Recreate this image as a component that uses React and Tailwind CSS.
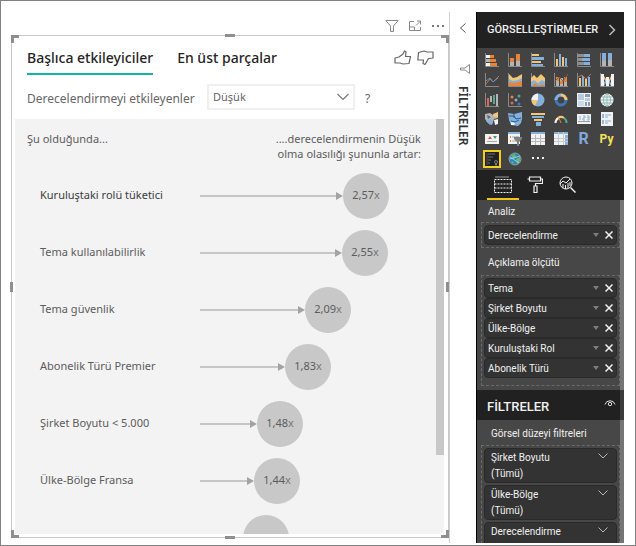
import React from "react";

const O = "#e8833a";
const B = "#86b0dc";
const Y = "#f3c677";
const G = "#b4b4b4";
const W = "#f2f2f2";
const D = "#3f79b5";

const influencers = [
  { label: "Kuruluştaki rolü tüketici", value: 2.57, strong: true },
  { label: "Tema kullanılabilirlik", value: 2.55 },
  { label: "Tema güvenlik", value: 2.09 },
  { label: "Abonelik Türü Premier", value: 1.83 },
  { label: "Şirket Boyutu < 5.000", value: 1.48 },
  { label: "Ülke-Bölge Fransa", value: 1.44 },
  { label: "", value: 1.3 },
];

const filters = [
  { name: "Şirket Boyutu", state: "(Tümü)" },
  { name: "Ülke-Bölge", state: "(Tümü)" },
  { name: "Derecelendirme", state: "" },
];

const arrowWidth = (value) => Math.round(54 + (value - 1.44) * 79);
const format = (value) => value.toFixed(2).replace(".", ",");

const axis = <path d="M.5 0v13.5H14" fill="none" stroke="#8a8a8a" strokeWidth="1" />;

const vizIcons = [
  ["Yığılmış çubuk", <>{axis}<path d="M1 2h4v3H1zM1 10h4v3H1z" fill={W} /><path d="M5 2h4v3H5zM5 10h7v3H5z" fill={O} /><path d="M1 6h4v3H1z" fill={G} /><path d="M5 6h6v3H5z" fill={O} /></>],
  ["Yığılmış sütun", <>{axis}<path d="M2 9h4v4H2zM8 8h4v5H8z" fill={G} /><path d="M2 5h4v4H2zM8 1h4v7H8z" fill={O} /></>],
  ["Kümelenmiş çubuk", <>{axis}<path d="M1 1h7v2H1zM1 8h9v2H1z" fill={Y} /><path d="M1 4h12v3H1zM1 11h11v2H1z" fill={B} /></>],
  ["Kümelenmiş sütun", <>{axis}<path d="M2 6h2v7H2zM8 4h2v9H8z" fill={Y} /><path d="M5 1h2v12H5zM11 5h2v8h-2z" fill={B} /></>],
  ["%100 çubuk", <>{axis}<path d="M1 1h6v3H1zM1 5h4v3H1zM1 9h6v3H1z" fill="#8f8f8f" /><path d="M7 1h6v3H7zM5 5h8v3H5zM7 9h6v3H7z" fill={B} /></>],
  ["%100 sütun", <>{axis}<path d="M2 8h4v5H2zM8 7h4v6H8z" fill={G} /><path d="M2 0h4v8H2zM8 0h4v7H8z" fill={B} /></>],

  ["Çizgi", <>{axis}<path d="M1 11l4-5 3 3 6-6" fill="none" stroke="#b9735a" /><path d="M1 8l4-3 3 4 5-4" fill="none" stroke="#6b8fb8" /></>],
  ["Alan", <>{axis}<path d="M1 1l4 4 4-1 5-3v12H1z" fill={Y} /><path d="M1 6l4 2 5-1 4-2v8H1z" fill={B} /><path d="M1 9l5 1 8-2v5H1z" fill={O} /></>],
  ["Yığılmış alan", <>{axis}<path d="M0 5l3-3 3 3 4-4 4 4v8H0z" fill={Y} /><path d="M0 9l3-2 4 3 4-3 3 2v4H0z" fill={B} /><path d="M1 13l3-3 4 3 3-2 3 2z" fill={O} /></>],
  ["Çizgi ve yığılmış sütun", <>{axis}<path d="M2 7h3v6H2zM6 5h3v8H6zM10 7h3v6h-3z" fill={G} /><path d="M2 4h3v4H2zM6 8h3v3H6zM10 4h3v5h-3z" fill={O} /><path d="M1 8l4-4 4 4 5-7" fill="none" stroke="#8c5d46" /></>],
  ["Çizgi ve kümelenmiş sütun", <>{axis}<path d="M2 5h2v8H2zM8 6h2v7H8z" fill={Y} /><path d="M5 3h2v10H5zM11 4h2v9h-2z" fill={B} /><path d="M1 4l4-2 4 4 5-5" fill="none" stroke="#b9735a" /></>],
  ["Şerit", <>{axis}<path d="M1 1h3v12H1zM6 4h3v9H6zM11 1h3v12h-3z" fill={W} /><path d="M4 3l2 3v3L4 6zM9 7l2-4v3L9 10z" fill={Y} /><path d="M4 9l2-2v3l-2 3zM9 7l2 3v3l-2-3z" fill={B} /></>],

  ["Şelale", <>{axis}<path d="M2 5h2v8H2z" fill="#d8695a" /><path d="M5 3h2v6H5zM11 1h2v12h-2z" fill={G} /><path d="M8 2h2v9H8z" fill="#5da58a" /></>],
  ["Dağılım", <>{axis}<circle cx="4" cy="4" r="1.500" fill={O} /><circle cx="8" cy="7" r="1.500" fill={B} /><circle cx="11" cy="3" r="1.500" fill="#5da58a" /><circle cx="4" cy="10" r="1.500" fill="#d8695a" /><circle cx="11" cy="11" r="1.500" fill={D} /></>],
  ["Pasta", <><circle cx="7" cy="7" r="6.500" fill={B} /><path d="M7 7V.5A6.500 6.500 0 0 0 .5 7z" fill={W} /><path d="M7 7L.5 7A6.500 6.500 0 0 0 4 12.800z" fill={Y} /></>],
  ["Halka", <><circle cx="7" cy="7" r="5" fill="none" stroke={D} strokeWidth="3" /><path d="M7 2a5 5 0 0 1 5 5" fill="none" stroke={Y} strokeWidth="3" /><path d="M2 7a5 5 0 0 1 5-5" fill="none" stroke={B} strokeWidth="3" /></>],
  ["Ağaç haritası", <><path d="M0 0h14v14H0z" fill={W} /><path d="M1 1h6v6H1zM8 5h5v3H8z" fill="#b7cbe0" /><path d="M1 8h6v5H1z" fill="#c9dced" /><path d="M8 1h5v3H8zM8 9h2v4H8zM11 9h2v4h-2z" fill="#8a9db0" /></>],
  ["Harita", <><circle cx="7" cy="7" r="6.500" fill={W} /><path d="M1 7h12M7 1v12M2 4h10M2 10h10" stroke="#8dbcb9" fill="none" /><ellipse cx="7" cy="7" rx="3.500" ry="6" fill="none" stroke="#8dbcb9" /></>],

  ["Kartogram", <><path d="M0 2l5-1 3 2 5-2v5l-4 1-2 6-4-2-3-4z" fill={G} /><path d="M8 2l5-2v5H9z" fill={Y} /><path d="M1 9l5-2 2 3-3 3z" fill={B} /><path d="M9 8l4-1v5l-3 1z" fill={W} /><path d="M2 3l4 2-3 2z" fill="#5a6670" /></>],
  ["Şekil haritası", <><path d="M0 1l6 1 8-2v7l-1 4-3 3-7-1-2-5z" fill={B} /><path d="M1 4h5l2 3 5-1M6 2v4M3 9l4 1 4-2" stroke="#235a94" fill="none" /><path d="M3 10l4 1-1 2H3z" fill={W} /></>],
  ["Huni", <><path d="M0 1h14v2H0z" fill={Y} /><path d="M1 4h12v2H1z" fill={B} /><path d="M3 7h8v2H3z" fill={Y} /><path d="M5 10h5v4H5z" fill={B} /></>],
  ["Ölçer", <><path d="M1.500 11a5.500 5.500 0 0 1 3-5" fill="none" stroke={W} strokeWidth="2" /><path d="M4 6a5 5 0 0 1 6 0" fill="none" stroke={Y} strokeWidth="2" /><path d="M10 6a5.500 5.500 0 0 1 2.500 5" fill="none" stroke="#5da58a" strokeWidth="2" /><path d="M7 11L5 6" stroke={O} /></>],
  ["Kart", <><path d="M0 2h14v10H0z" fill={W} /><path d="M1 9h12v1H1z" fill="#9b9b9b" /><path d="M3 4v4M6 4h2v2H6v2h2M10 4h2v4h-2M10 6h2" stroke={B} fill="none" /></>],
  ["Çok satırlı kart", <><path d="M1 0h12v14H1z" fill={W} /><path d="M3 2v4M3 8v4" stroke={D} /><path d="M5 3h6M5 5h3M5 9h6M5 11h3" stroke={B} /></>],

  ["KPI", <><path d="M0 2h14v10H0z" fill={W} /><path d="M8 4h4l-2 3z" fill="#489a78" /><path d="M3 7l2-3 2 3z" fill="#d65b4b" /><path d="M2 9.500h10" stroke="#aaa" /></>],
  ["Dilimleyici", <><path d="M0 0h12v12H0z" fill={W} /><path d="M0 0h12v2H0z" fill={B} /><path d="M2 4h1v2H2zM2 8h1v2H2z" fill={O} /><path d="M4 5h7l-3 0M4 9h4" stroke="#aaa" /><path d="M6 5h8v2l-3 3v4H9v-4L6 7z" fill="#808080" /></>],
  ["Tablo", <><path d="M0 0h14v13H0z" fill={W} /><path d="M0 0h14v2H0z" fill={B} /><path d="M0 6.500h14M0 9.500h14M4.500 3v10M9.500 3v10" stroke="#b8b8b8" /></>],
  ["Matris", <><path d="M0 0h14v13H0z" fill={W} /><path d="M0 0h14v2H0zM11 3h3v10h-3z" fill={B} /><path d="M0 6.500h14M0 9.500h14M4.500 0v13M9.500 0v13" stroke="#c4cbd2" /></>],
  ["R betiği", "R"],
  ["Python betiği", "Py"],
];

function Svg({ children, className = "size-3.5", box = "0 0 14 14" }) {
  return (
    <svg aria-hidden="true" viewBox={box} className={"shrink-0 " + className} fill="none" stroke="none">
      {children}
    </svg>
  );
}

function IconButton({ label, children, className = "" }) {
  return (
    <button type="button" aria-label={label} className={"grid place-items-center " + className}>
      {children}
    </button>
  );
}

function Glyph({ children }) {
  if (children === "R") return <span className="text-base leading-4 font-bold text-[#7fa9dc]">R</span>;
  if (children === "Py") return <span className="text-xs leading-4 font-bold text-[#f5e05a]">Py</span>;
  return <Svg>{children}</Svg>;
}

function Handles() {
  const c = "absolute border-[#8f8f8f] ";
  return (
    <div aria-hidden="true" className="pointer-events-none">
      <span className={c + "-top-px -left-px size-2 border-t-[3px] border-l-[3px]"} />
      <span className={c + "-top-px -right-px size-2 border-t-[3px] border-r-[3px]"} />
      <span className={c + "-bottom-px -left-px size-2 border-b-[3px] border-l-[3px]"} />
      <span className={c + "-right-px -bottom-px size-2 border-r-[3px] border-b-[3px]"} />
      <span className="absolute -top-0.5 left-1/2 h-[3px] w-2.5 -translate-x-1/2 bg-[#8f8f8f]" />
      <span className="absolute -bottom-0.5 left-1/2 h-[3px] w-2.5 -translate-x-1/2 bg-[#8f8f8f]" />
      <span className="absolute top-1/2 -left-0.5 h-2.5 w-[3px] -translate-y-1/2 bg-[#8f8f8f]" />
      <span className="absolute top-1/2 -right-px h-2.5 w-[3px] -translate-y-1/2 bg-[#8f8f8f]" />
    </div>
  );
}

const thumbUp = "M1 8l4-1 4-3 1.500-3 1.500 1-.5 4.500h5l-1.500 7-6 .5-3-1H1z";
const thumbDown = "M1.500 2.500L7 1l3 1h6v6l-4.500.5L8 14.500l-2-1 .5-3.500H.8z";

function Visual() {
  return (
    <section className="relative flex min-h-0 flex-1 flex-col border border-[#c8c8c8] pr-1 pb-[3px] pl-[3px]">
      <Handles />
      <div className="flex h-12 items-center pr-2.5 pl-3 text-sm font-medium text-[#252423]">
        <div role="tablist" className="flex flex-1 gap-6">
          <button type="button" role="tab" aria-selected="true" className="border-b-2 border-[#12b5a8] pb-[3px] leading-6">
            Başlıca etkileyiciler
          </button>
          <button type="button" role="tab" aria-selected="false" className="border-b-2 border-transparent pb-[3px] leading-6">
            En üst parçalar
          </button>
        </div>
        <div className="flex gap-1.5 pb-1">
          <IconButton label="Beğen">
            <Svg className="h-4 w-[17px]" box="0 0 17 16"><path d={thumbUp} stroke="#666" strokeWidth="1.200" strokeLinejoin="round" /></Svg>
          </IconButton>
          <IconButton label="Beğenme">
            <Svg className="h-4 w-[17px]" box="0 0 17 16"><path d={thumbDown} stroke="#666" strokeWidth="1.200" strokeLinejoin="round" /></Svg>
          </IconButton>
        </div>
      </div>

      <div className="flex h-[35px] items-start pl-3 text-xs text-[#666]">
        <label htmlFor="level" className="w-[180px] shrink-0 leading-[30px] whitespace-nowrap">
          Derecelendirmeyi etkileyenler
        </label>
        <div className="relative">
          <select id="level" className="h-[26px] w-[148px] appearance-none border-2 border-[#efefef] bg-white px-1 text-[11px]">
            <option>Düşük</option>
          </select>
          <Svg className="pointer-events-none absolute top-2 right-1.5 h-2.5 w-3" box="0 0 12 10"><path d="M.5 2L6 7.500 11.500 2" stroke="#777" strokeWidth="1.200" /></Svg>
        </div>
        <button type="button" aria-label="Yardım" className="ml-2.5 leading-[30px]">?</button>
      </div>

      <div className="flex min-h-0 flex-1 overflow-hidden bg-[#f3f3f3] text-[11px] text-[#5c5c5c]">
        <div className="flex-1">
          <div className="flex h-12 justify-between pt-3 pr-[15px] pl-3 leading-[15px]">
            <p>Şu olduğunda...</p>
            <p className="text-right">....derecelendirmenin Düşük<br />olma olasılığı şununla artar:</p>
          </div>
          <ul>
            {influencers.map(({ label, value, strong }) => (
              <li key={value} className="flex h-[57px] items-center pl-[25px]">
                <span className={"w-[160px] shrink-0 whitespace-nowrap " + (strong ? "text-[#3c3c3c]" : "")}>{label}</span>
                <span className="flex shrink-0 items-center" style={{ width: arrowWidth(value) }}>
                  <span className="h-0.5 flex-1 bg-[#c6c6c6]" />
                  <Svg className="h-2 w-[7px]" box="0 0 7 8"><path d="M0 0l7 4-7 4z" fill="#a3a3a3" /></Svg>
                </span>
                <span className="grid size-[46px] shrink-0 place-items-center rounded-full bg-[#c8c8c8]">
                  {label && <span>{format(value)}<span className="text-[#777]">x</span></span>}
                </span>
              </li>
            ))}
          </ul>
        </div>
        <div aria-hidden="true" className="h-[81%] w-2 bg-[#c8c8c8]" />
      </div>
    </section>
  );
}

function Field({ name }) {
  return (
    <li className="flex h-5 items-center rounded-sm border border-[#2a2a2a] bg-[#333] px-[3px]">
      <span className="flex-1 whitespace-nowrap">{name}</span>
      <IconButton label={name + " menüsü"} className="mr-1.5">
        <Svg className="h-1 w-1.5" box="0 0 6 4"><path d="M0 0h6L3 4z" fill="#7d7d7d" /></Svg>
      </IconButton>
      <IconButton label={name + " alanını kaldır"}>
        <Svg className="size-2" box="0 0 8 8"><path d="M.5.5l7 7M7.500.5l-7 7" stroke="#f0f0f0" strokeWidth="1.500" /></Svg>
      </IconButton>
    </li>
  );
}

function FilterCard({ name, state }) {
  return (
    <li className="flex h-[35px] shrink-0 justify-between rounded-sm border border-[#2a2a2a] bg-[#333] pt-px pr-2 pl-1.5 leading-4">
      <p>{name}<br />{state}</p>
      <IconButton label={name + " filtresini genişlet"} className="h-3">
        <Svg className="h-1.5 w-2.5" box="0 0 10 6"><path d="M.5.5L5 5 9.500.5" stroke="#b5b5b5" /></Svg>
      </IconButton>
    </li>
  );
}

function Sidebar() {
  return (
    <aside className="flex w-[148px] shrink-0 flex-col overflow-hidden border-l border-black bg-[#474747] font-['Roboto','Noto_Sans',sans-serif] text-[10px] text-[#f0f0f0]">
      <header className="flex h-9 shrink-0 items-center justify-between bg-[#212121] pr-2 pl-2.5">
        <h2 className="text-[11px] font-medium">GÖRSELLEŞTİRMELER</h2>
        <IconButton label="Daralt">
          <Svg className="h-3 w-2" box="0 0 8 12"><path d="M1.500 1L6.500 6l-5 5" stroke="#bbb" strokeWidth="1.500" /></Svg>
        </IconButton>
      </header>

      <div className="grid h-[122px] shrink-0 grid-cols-6 grid-rows-6 bg-[#434343] pt-0.5 pr-1.5 pb-px pl-[3px]">
        {vizIcons.map(([label, art]) => (
          <IconButton key={label} label={label}><Glyph>{art}</Glyph></IconButton>
        ))}
        <IconButton label="Başlıca etkileyiciler">
          <span className="grid size-[18px] place-items-center border-2 border-[#f2cf1d] bg-[#222]">
            <Svg className="size-3.5"><path d="M2 1v12" stroke="#555" /><path d="M3 2h7M3 5h5M3 8h3M3 11h2" stroke="#555" strokeWidth="1.500" /><circle cx="11" cy="10" r="1.500" stroke="#777" /><path d="M10 11v3l1-1 1 1v-3" fill="#777" /></Svg>
          </span>
        </IconButton>
        <IconButton label="ArcGIS haritası">
          <Svg><circle cx="7" cy="7" r="6" fill="#2e86b8" stroke="#9a9a9a" /><path d="M3 3l4-1 1 3-3 2zM8 7l4-2v4l-3 3zM3 9l3 1-1 2z" fill="#62b877" /><path d="M2 7l10-3M2 5l9 6" stroke="#b5dced" strokeWidth=".8" /></Svg>
        </IconButton>
        <IconButton label="Diğer">
          <Svg><path d="M1 5h2v2H1zM6 5h2v2H6zM11 5h2v2h-2z" fill={W} /></Svg>
        </IconButton>
      </div>

      <nav className="flex h-[30px] shrink-0 items-stretch bg-[#212121] pl-2.5">
        <IconButton label="Alanlar" className="w-8 border-b-2 border-[#f2c811]">
          <Svg className="h-[17px] w-[18px]" box="0 0 18 17"><path d="M1 1h14" stroke="#999" /><path d="M.5 3.500h17v13H.5zM.5 8h17M.5 12h17" stroke={W} strokeDasharray="2 1" /></Svg>
        </IconButton>
        <IconButton label="Biçim" className="w-8 border-b-2 border-transparent">
          <Svg className="h-[17px] w-4" box="0 0 16 17"><path d="M2.500 1h11v4h-11zM.5 3h2M13.500 3h2v4.500h-7V10M7 10h3v6.500H7z" stroke={W} strokeWidth="1.200" /></Svg>
        </IconButton>
        <IconButton label="Analiz" className="w-8 border-b-2 border-transparent">
          <Svg className="size-[17px]" box="0 0 17 17"><circle cx="7" cy="7" r="6" stroke={W} /><path d="M11.500 11.500l5 5" stroke={W} strokeWidth="1.500" /><path d="M1 8l3-3 3 2 4-4" stroke={W} /><path d="M4 8v4M6.500 9v4M9 7v5M11 6v4" stroke={W} /></Svg>
        </IconButton>
      </nav>

      <section className="shrink-0 border-r-4 border-[#757575] pb-1 pl-1">
        <h3 className="pt-1 pl-[7px] leading-4">Analiz</h3>
        <ul className="mt-0.5 border border-dashed border-[#6a6a6a] p-0.5">
          <Field name="Derecelendirme" />
        </ul>
        <h3 className="mt-[7px] pl-[7px] leading-4">Açıklama ölçütü</h3>
        <ul className="mt-1 border border-dashed border-[#6a6a6a] p-0.5 pb-[7px]">
          {["Tema", "Şirket Boyutu", "Ülke-Bölge", "Kuruluştaki Rol", "Abonelik Türü"].map((n) => <Field key={n} name={n} />)}
        </ul>
      </section>

      <header className="flex h-[30px] shrink-0 items-center justify-between border-r-4 border-[#3b3b3b] bg-[#212121] pt-1 pr-1 pl-2.5">
        <h2 className="text-[13px] font-medium">FİLTRELER</h2>
        <IconButton label="Filtreleri gizle" className="pb-2">
          <Svg className="h-2 w-3" box="0 0 12 8"><path d="M1 5.500a5.200 5.200 0 0 1 10 0" stroke="#ddd" /><circle cx="6" cy="5" r="1.700" stroke="#ddd" /></Svg>
        </IconButton>
      </header>

      <section className="flex min-h-0 flex-1 flex-col overflow-hidden border-r-4 border-[#757575] pl-1">
        <h3 className="pt-1.5 pb-[3px] pl-2.5 leading-4">Görsel düzeyi filtreleri</h3>
        <ul className="flex flex-col gap-0.5 border border-b-0 border-dashed border-[#6a6a6a] p-0.5">
          {filters.map((f) => <FilterCard key={f.name} {...f} />)}
        </ul>
      </section>
    </aside>
  );
}

export default function App() {
  return (
    <div className="flex h-screen border border-[#808080] bg-white pt-[11px] pr-[11px] pb-0.5 pl-2.5 font-['Noto_Sans','Open_Sans',sans-serif]">
      <main className="flex min-w-0 flex-1 flex-col pb-[5px]">
        <div className="flex h-[23px] items-center justify-end gap-2.5 pt-1 pr-1">
          <IconButton label="Filtreler">
            <Svg className="h-3 w-3.5" box="0 0 14 12"><path d="M.8.5h12.400L8.500 6v5.500h-3V6z" stroke="#888" /></Svg>
          </IconButton>
          <IconButton label="Odak modu">
            <Svg className="h-3 w-3" box="0 0 12 12"><path d="M5 1.500H.5v9h11V7M.5 7h5v3.500M7 5.500L11 1.500M8 1h3.500v3.500" stroke="#888" /></Svg>
          </IconButton>
          <IconButton label="Diğer seçenekler">
            <Svg className="h-3 w-3.5" box="0 0 14 12"><path d="M1 5h2v2H1zM6 5h2v2H6zM11 5h2v2h-2z" fill="#777" /></Svg>
          </IconButton>
        </div>
        <Visual />
      </main>
      <aside className="flex w-[27px] shrink-0 flex-col items-center border-l border-[#d0d0d0] pt-2.5">
        <IconButton label="Filtre bölmesini aç">
          <Svg className="h-3 w-2" box="0 0 8 12"><path d="M6.500 1.500L1.500 6l5 4.500" stroke="#555" /></Svg>
        </IconButton>
        <Svg className="mt-[30px] ml-1 size-2.5" box="0 0 10 10"><path d="M9.500.5v9L5 6H.5V4H5z" stroke="#888" /></Svg>
        <h2 className="mt-3 text-xs leading-4 font-semibold text-[#333] [writing-mode:vertical-rl]">FİLTRELER</h2>
      </aside>
      <Sidebar />
    </div>
  );
}
